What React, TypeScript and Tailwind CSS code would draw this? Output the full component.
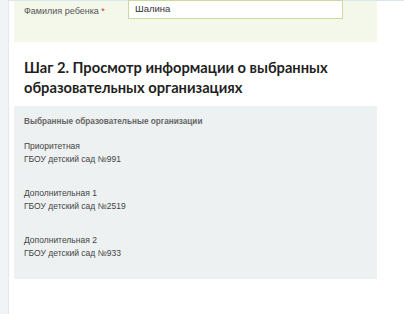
export default function App() {
  const items = [
    { type: 'Приоритетная', name: 'ГБОУ детский сад №991' },
    { type: 'Дополнительная 1', name: 'ГБОУ детский сад №2519' },
    { type: 'Дополнительная 2', name: 'ГБОУ детский сад №933' },
  ];

  return (
    <div className="w-[404px] h-[314px] overflow-hidden bg-white flex" style={{ fontFamily: '"Liberation Sans", Arial, sans-serif' }}>
      {/* left rail */}
      <div className="w-[9px] shrink-0 bg-[#f1f4f6] border-r border-[#e2e8eb]" />

      <div className="flex-1 flex flex-col">
        <div className="h-px bg-[#dbe5ee]" />
        <div className="pl-[5px] w-[368px]">
          {/* child surname row */}
          <div className="bg-[#f4f8eb] h-[41px] flex items-start pl-[10px]">
            <div className="w-[104px] pt-[4px] text-[9px] text-[#555]">
              Фамилия ребенка <span className="text-[#d33]">*</span>
            </div>
            <div className="w-[215px] h-[19px] -mt-px bg-white border border-[#cbd89f] flex items-center px-[6px] text-[9.5px] text-[#333]">
              Шалина
            </div>
          </div>

          {/* step heading */}
          <h2 className="pl-[10px] pt-[15px] pb-[9px] text-[14.7px] leading-[20px] font-bold text-[#1f1f1f] font-['Lato',sans-serif]">
            Шаг 2. Просмотр информации о выбранных образовательных организациях
          </h2>

          {/* selected organisations */}
          <div className="bg-[#edf1f1] h-[173px] px-[10px] pt-[10px]">
            <div className="text-[8.2px] font-bold text-[#666] leading-[12px]">Выбранные образовательные организации</div>
            <div className="mt-[12px] flex flex-col gap-[21px]">
              {items.map((it) => (
                <div key={it.type} className="text-[8.5px] leading-[13px] text-[#444]">
                  <div>{it.type}</div>
                  <div>{it.name}</div>
                </div>
              ))}
            </div>
          </div>
        </div>
      </div>
    </div>
  );
}
